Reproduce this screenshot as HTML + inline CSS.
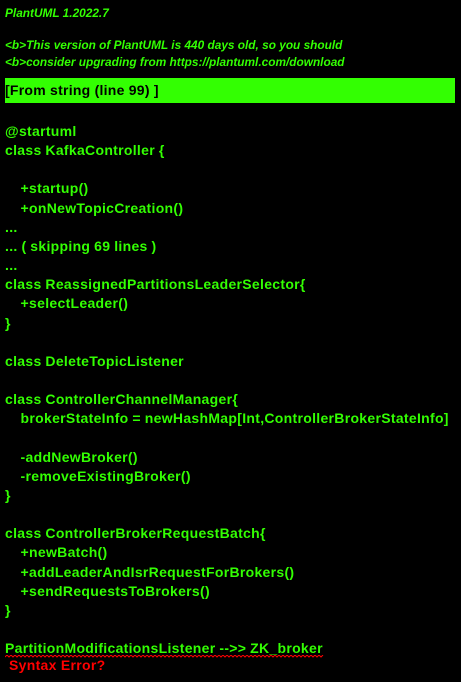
<!DOCTYPE html>
<html><head><meta charset="utf-8"><style>
html,body{margin:0;padding:0;background:#000;width:461px;height:682px;overflow:hidden}
body{position:relative;font-family:"Liberation Sans",sans-serif;font-weight:bold}
.h{position:absolute;left:5px;color:#33ff02;font-style:italic;font-size:11.85px;line-height:16px;white-space:nowrap}
.c{position:absolute;left:5px;color:#33ff02;font-size:14px;line-height:19.15px;white-space:pre;letter-spacing:0.3px;word-spacing:-0.3px}
.box{position:absolute;left:5px;top:78px;width:450px;height:25px;background:#33ff02}
.box span{position:absolute;left:0px;top:3px;color:#000;font-size:14px;line-height:19px;letter-spacing:0.25px}
.err{position:absolute;left:9px;top:656px;color:#ff0000;font-size:14px;line-height:19px;letter-spacing:0.3px}
.wave{position:absolute;left:5px;top:655px;width:319px;height:3px}
</style></head><body>
<div class="h" style="top:5px">PlantUML 1.2022.7</div>
<div class="h" style="top:37px">&lt;b&gt;This version of PlantUML is 440 days old, so you should</div>
<div class="h" style="top:54px">&lt;b&gt;consider upgrading from https://plantuml.com/download</div>
<div class="box"><span>[From string (line 99) ]</span></div>
<div class="c" style="top:122px">@startuml
class KafkaController {

    +startup()
    +onNewTopicCreation()
...
... ( skipping 69 lines )
...
class ReassignedPartitionsLeaderSelector{
    +selectLeader()
}

class DeleteTopicListener

class ControllerChannelManager{
    brokerStateInfo = newHashMap[Int,ControllerBrokerStateInfo]

    -addNewBroker()
    -removeExistingBroker()
}

class ControllerBrokerRequestBatch{
    +newBatch()
    +addLeaderAndIsrRequestForBrokers()
    +sendRequestsToBrokers()
}

PartitionModificationsListener --&gt;&gt; ZK_broker</div>
<svg class="wave" viewBox="0 0 319 3"><polyline fill="none" stroke="#ff0000" stroke-width="1" points="0,2 2,0 4,2 6,0 8,2 10,0 12,2 14,0 16,2 18,0 20,2 22,0 24,2 26,0 28,2 30,0 32,2 34,0 36,2 38,0 40,2 42,0 44,2 46,0 48,2 50,0 52,2 54,0 56,2 58,0 60,2 62,0 64,2 66,0 68,2 70,0 72,2 74,0 76,2 78,0 80,2 82,0 84,2 86,0 88,2 90,0 92,2 94,0 96,2 98,0 100,2 102,0 104,2 106,0 108,2 110,0 112,2 114,0 116,2 118,0 120,2 122,0 124,2 126,0 128,2 130,0 132,2 134,0 136,2 138,0 140,2 142,0 144,2 146,0 148,2 150,0 152,2 154,0 156,2 158,0 160,2 162,0 164,2 166,0 168,2 170,0 172,2 174,0 176,2 178,0 180,2 182,0 184,2 186,0 188,2 190,0 192,2 194,0 196,2 198,0 200,2 202,0 204,2 206,0 208,2 210,0 212,2 214,0 216,2 218,0 220,2 222,0 224,2 226,0 228,2 230,0 232,2 234,0 236,2 238,0 240,2 242,0 244,2 246,0 248,2 250,0 252,2 254,0 256,2 258,0 260,2 262,0 264,2 266,0 268,2 270,0 272,2 274,0 276,2 278,0 280,2 282,0 284,2 286,0 288,2 290,0 292,2 294,0 296,2 298,0 300,2 302,0 304,2 306,0 308,2 310,0 312,2 314,0 316,2 318,0"/></svg>
<div class="err">Syntax Error?</div>
</body></html>
